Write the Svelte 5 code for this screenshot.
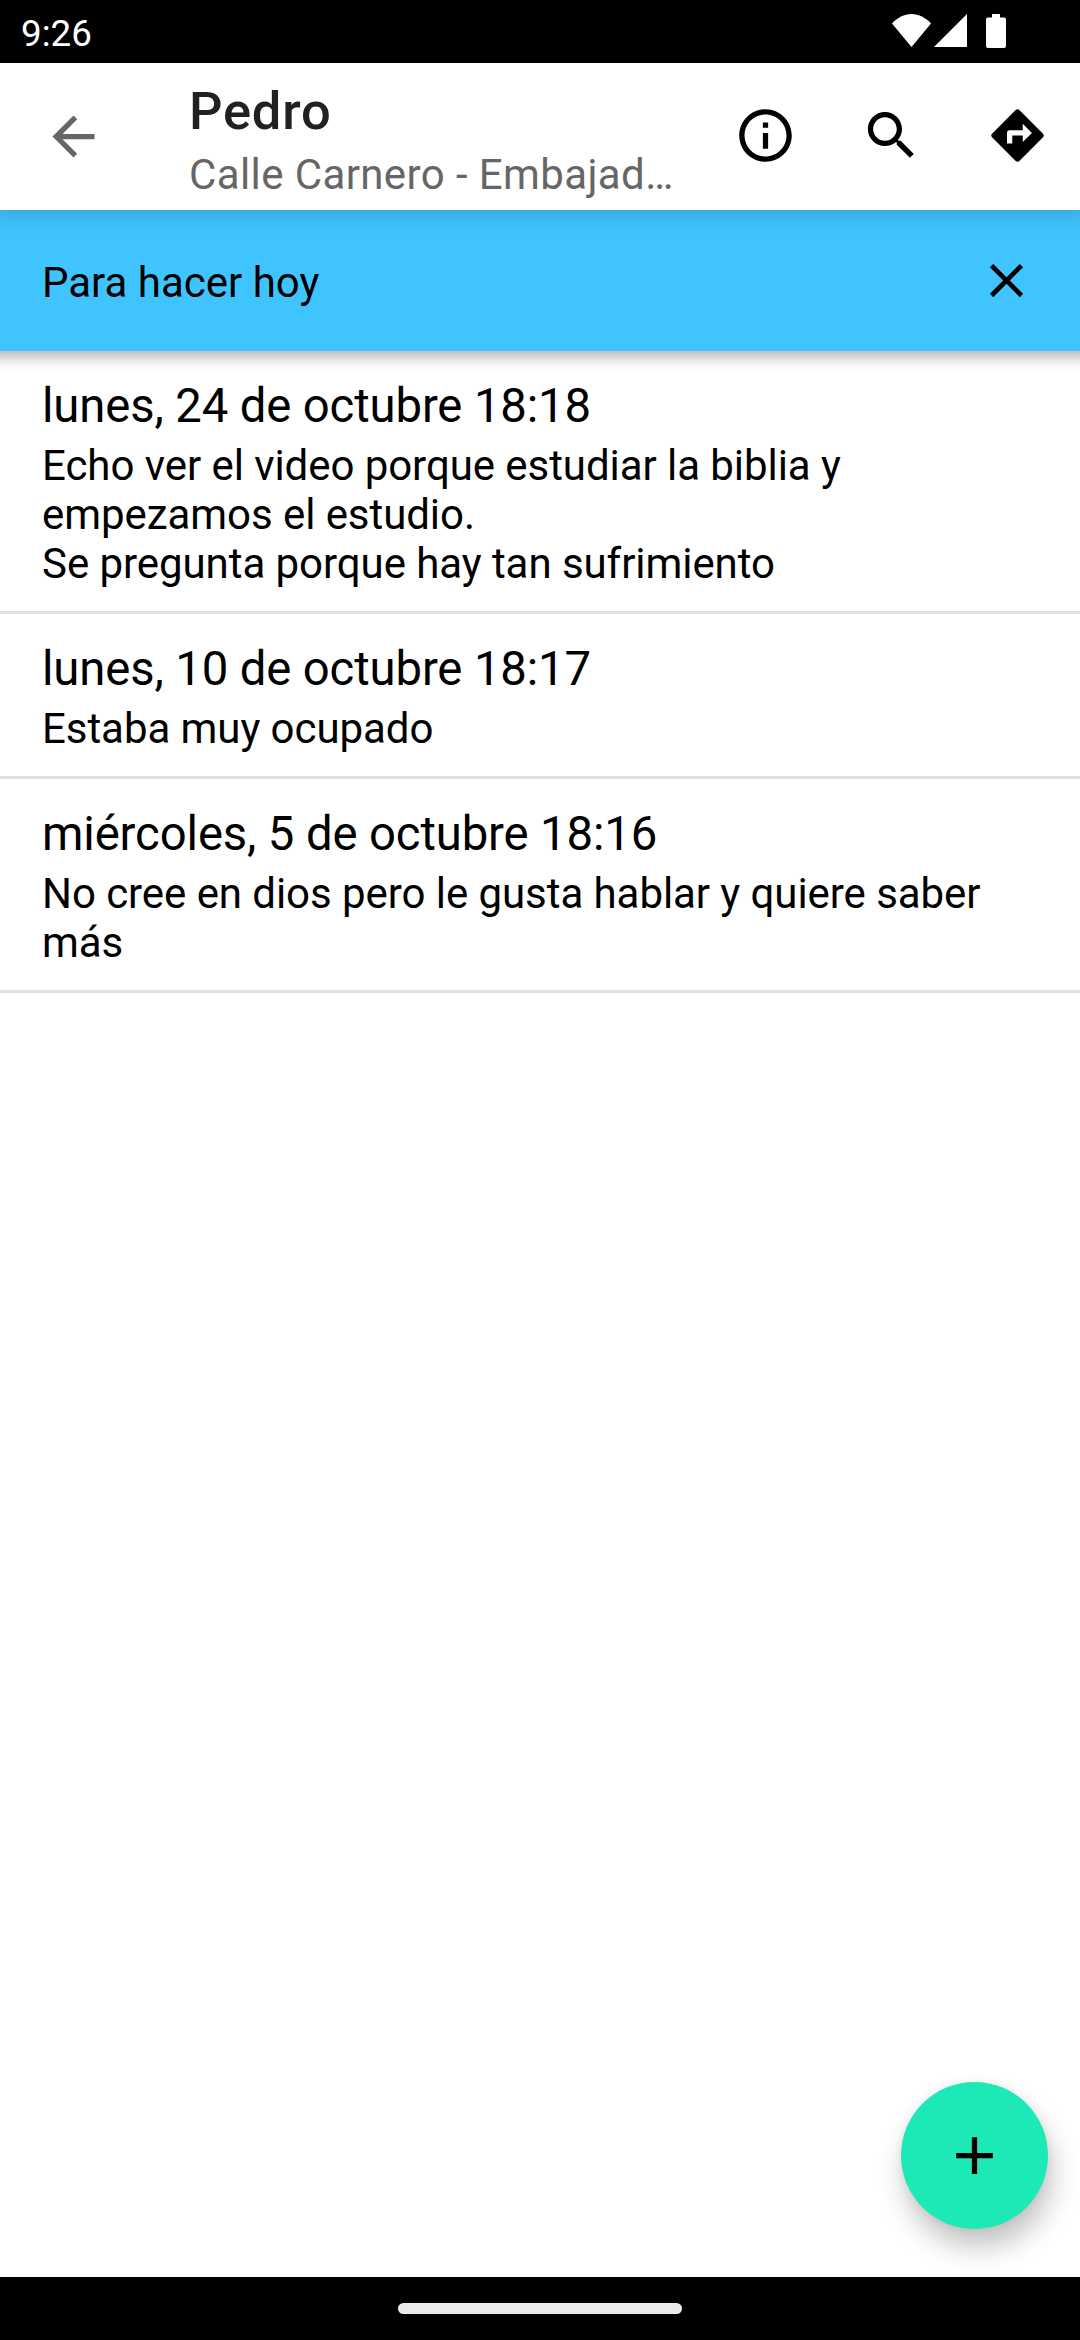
<script>
	const contact = {
		name: 'Pedro',
		address: 'Calle Carnero - Embajad…'
	};

	let visits = [
		{
			id: 1,
			date: 'lunes, 24 de octubre 18:18',
			notes: 'Echo ver el video porque estudiar la biblia y empezamos el estudio.\nSe pregunta porque hay tan sufrimiento'
		},
		{ id: 2, date: 'lunes, 10 de octubre 18:17', notes: 'Estaba muy ocupado' },
		{
			id: 3,
			date: 'miércoles, 5 de octubre 18:16',
			notes: 'No cree en dios pero le gusta hablar y quiere saber más'
		}
	];

	let showReminder = $state(true);
</script>

<div class="screen">
	<div class="status-bar">
		<span class="clock">9:26</span>
		<div class="status-icons">
			<svg class="wifi" viewBox="0 0 39 33">
				<path d="M0 9.4C5.4 3.6 12.2 0 19.5 0S33.6 3.6 39 9.4L19.5 33z" />
			</svg>
			<svg class="signal" viewBox="0 0 33 33">
				<path d="M33 0v33H0z" />
			</svg>
			<svg class="battery" viewBox="0 0 20 34">
				<path d="M6 0h8v3.4h4a2 2 0 0 1 2 2V32a2 2 0 0 1-2 2H2a2 2 0 0 1-2-2V5.4a2 2 0 0 1 2-2h4z" />
			</svg>
		</div>
	</div>

	<header class="toolbar">
		<button class="back" aria-label="Atrás">
			<svg viewBox="0 0 24 24">
				<path d="M20 11H7.83l5.59-5.59L12 4l-8 8 8 8 1.41-1.41L7.83 13H20v-2z" />
			</svg>
		</button>
		<div class="titles">
			<h1>{contact.name}</h1>
			<p>{contact.address}</p>
		</div>
		<div class="actions">
			<button aria-label="Información">
				<svg viewBox="0 0 24 24">
					<path d="M11 7h2v2h-2zm0 4h2v6h-2zm1-9C6.48 2 2 6.48 2 12s4.48 10 10 10 10-4.48 10-10S17.52 2 12 2zm0 18c-4.41 0-8-3.59-8-8s3.59-8 8-8 8 3.59 8 8-3.59 8-8 8z" />
				</svg>
			</button>
			<button aria-label="Buscar">
				<svg viewBox="0 0 24 24">
					<path d="M15.5 14h-.79l-.28-.27C15.41 12.59 16 11.11 16 9.5 16 5.91 13.09 3 9.5 3S3 5.91 3 9.5 5.91 16 9.5 16c1.61 0 3.09-.59 4.23-1.57l.27.28v.79l5 4.99L20.49 19l-4.99-5zm-6 0C7.01 14 5 11.99 5 9.5S7.01 5 9.5 5 14 7.01 14 9.5 11.99 14 9.5 14z" />
				</svg>
			</button>
			<button aria-label="Cómo llegar">
				<svg viewBox="0 0 24 24">
					<path d="M21.71 11.29l-9-9c-.39-.39-1.02-.39-1.41 0l-9 9c-.39.39-.39 1.02 0 1.41l9 9c.39.39 1.02.39 1.41 0l9-9c.39-.38.39-1.01 0-1.41zM14 14.5V12h-4v3H8v-4c0-.55.45-1 1-1h5V7.5l3.5 3.5-3.5 3.5z" />
				</svg>
			</button>
		</div>
	</header>

	{#if showReminder}
		<div class="reminder">
			<span>Para hacer hoy</span>
			<button aria-label="Cerrar" onclick={() => (showReminder = false)}>
				<svg viewBox="0 0 24 24">
					<path d="M19 6.41L17.59 5 12 10.59 6.41 5 5 6.41 10.59 12 5 17.59 6.41 19 12 13.41 17.59 19 19 17.59 13.41 12z" />
				</svg>
			</button>
		</div>
	{/if}

	<main>
		<ul class="visits">
			{#each visits as visit (visit.id)}
				<li>
					<h2>{visit.date}</h2>
					<p>{visit.notes}</p>
				</li>
			{/each}
		</ul>
		<button class="fab" aria-label="Añadir visita">
			<svg viewBox="0 0 24 24">
				<path d="M19 13h-6v6h-2v-6H5v-2h6V5h2v6h6v2z" />
			</svg>
		</button>
	</main>

	<div class="nav-bar">
		<div class="handle"></div>
	</div>
</div>

<style>
	:global(body) {
		background: #fff;
	}

	.screen {
		display: flex;
		flex-direction: column;
		width: 1080px;
		height: 2340px;
		overflow: hidden;
		background: #fff;
		color: #000;
		font-family: Roboto, "Liberation Sans", sans-serif;
		font-size: 42px;
	}

	h1, h2, p, ul {
		margin: 0;
		padding: 0;
		font-weight: 400;
	}

	button {
		display: flex;
		align-items: center;
		justify-content: center;
		padding: 0;
		border: none;
		background: none;
		color: inherit;
	}

	svg {
		display: block;
		width: 63px;
		height: 63px;
		fill: currentColor;
	}

	.status-bar {
		display: flex;
		justify-content: space-between;
		flex: none;
		height: 63px;
		background: #000;
		color: #fff;
		z-index: 3;
	}

	.clock {
		padding: 12px 0 0 21px;
		font-size: 36.75px;
		line-height: 43px;
	}

	.status-icons {
		display: flex;
		padding: 14px 74px 0 0;
	}

	.wifi {
		width: 39px;
		height: 33px;
	}

	.signal {
		width: 33px;
		height: 33px;
		margin-left: 3px;
	}

	.battery {
		width: 20px;
		height: 34px;
		margin-left: 19px;
	}

	.toolbar {
		display: flex;
		flex: none;
		height: 147px;
		background: #fff;
		box-shadow: 0 0 18px 6px rgba(0, 0, 0, 0.16);
		z-index: 2;
	}

	.back {
		width: 147px;
		color: #666;
	}

	.titles {
		flex: 1;
		min-width: 0;
		padding: 17px 28px 0 42px;
	}

	.titles h1 {
		color: #212121;
		font-size: 52.5px;
		font-weight: 500;
		line-height: 62px;
		letter-spacing: 0.015em;
	}

	.titles p {
		padding-top: 8px;
		overflow: hidden;
		color: #666;
		line-height: 50px;
		letter-spacing: 0.009375em;
		text-overflow: ellipsis;
		white-space: nowrap;
	}

	.actions {
		display: flex;
		padding-bottom: 2px;
	}

	.actions button {
		width: 126px;
	}

	.reminder {
		display: flex;
		align-items: center;
		justify-content: space-between;
		flex: none;
		height: 141px;
		padding: 0 42px;
		background: #40c4ff;
		box-shadow: 0 -6px 14px 12px rgba(0, 0, 0, 0.31);
		z-index: 1;
	}

	.reminder span {
		padding-top: 4px;
	}

	.reminder button {
		width: 63px;
		height: 63px;
	}

	.reminder svg {
		width: 57px;
		height: 57px;
	}

	main {
		position: relative;
		flex: 1;
	}

	.visits {
		list-style: none;
	}

	.visits li {
		padding: 27px 42px 23px;
		border-bottom: 3px solid #e0e0e0;
	}

	.visits h2 {
		font-size: 47.25px;
		line-height: 56px;
		letter-spacing: -0.12px;
	}

	.visits p {
		padding-top: 7px;
		line-height: 49px;
		letter-spacing: -0.06px;
		white-space: pre-line;
	}

	.fab {
		position: absolute;
		right: 32px;
		bottom: 48px;
		width: 147px;
		height: 147px;
		border-radius: 50%;
		background: #1de9b6;
		box-shadow: 4px 18px 28px rgba(0, 0, 0, 0.24), 0 0 8px rgba(0, 0, 0, 0.06);
	}

	.nav-bar {
		display: flex;
		align-items: center;
		justify-content: center;
		flex: none;
		height: 63px;
		background: #000;
		z-index: 1;
	}

	.handle {
		width: 284px;
		height: 11px;
		border-radius: 6px;
		background: #ebebeb;
	}
</style>
